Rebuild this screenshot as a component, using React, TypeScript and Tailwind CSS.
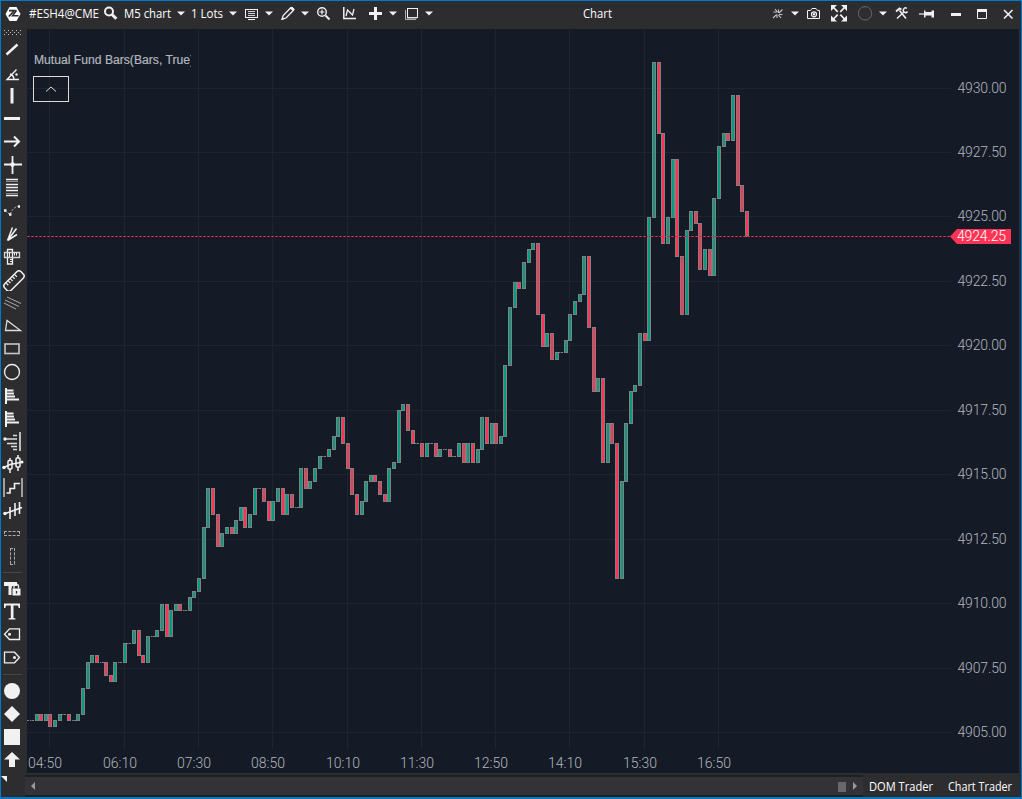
import type { ReactNode } from 'react'

// closing price of every 5 minute bar, in ticks of 0.25 above 4905.00
const CLOSES = [
  2, 2, 3, 2, 3, 1, 2, 3, 3, 2, 2, 3, 7, 11, 12, 11, 11, 9, 8, 11, 11, 14, 14, 16, 12, 11, 15, 15, 16, 20, 15, 19,
  20, 19, 19, 21, 22, 24, 32, 38, 34, 29, 31, 32, 31, 33, 35, 32, 34, 38, 38, 36, 33, 36, 38, 34, 37, 35, 35, 41,
  38, 39, 41, 43, 43, 44, 46, 49, 45, 41, 37, 34, 36, 39, 40, 39, 37, 36, 41, 42, 50, 51, 47, 45, 45, 43, 45, 45,
  43, 44, 44, 43, 43, 45, 42, 45, 42, 44, 49, 45, 48, 45, 46, 57, 66, 70, 69, 73, 75, 76, 65, 60, 62, 58, 59, 59,
  61, 65, 67, 68, 74, 63, 53, 55, 42, 48, 45, 24, 39, 48, 53, 54, 62, 61, 80, 104, 93, 76, 80, 89, 74, 65, 78, 81,
  79, 72, 75, 71, 83, 91, 93, 92, 99, 85, 81, 77,
]

const PRICES = [
  { label: '4930.00', y: 88 },
  { label: '4927.50', y: 152 },
  { label: '4925.00', y: 216 },
  { label: '4922.50', y: 281 },
  { label: '4920.00', y: 345 },
  { label: '4917.50', y: 410 },
  { label: '4915.00', y: 474 },
  { label: '4912.50', y: 539 },
  { label: '4910.00', y: 603 },
  { label: '4907.50', y: 668 },
  { label: '4905.00', y: 732 },
]

const TIMES = [
  { label: '04:50', x: 49 },
  { label: '06:10', x: 124 },
  { label: '07:30', x: 198 },
  { label: '08:50', x: 272 },
  { label: '10:10', x: 347 },
  { label: '11:30', x: 421 },
  { label: '12:50', x: 495 },
  { label: '14:10', x: 569 },
  { label: '15:30', x: 644 },
  { label: '16:50', x: 718 },
]

const barX = (i: number) => Math.floor(48.93 + 4.643 * (i - 5))
const barY = (t: number) => Math.floor(733.343 - 6.4475 * t)

function Bar({ i }: { i: number }) {
  const close = CLOSES[i]
  const open = i === 0 ? 2 : CLOSES[i - 1]
  const x = barX(i)
  if (open === close) {
    return (
      <g>
        <rect x={x} y={barY(close)} width={4} height={1} fill="#808080" />
        <rect x={x + 1} y={barY(close)} width={1} height={1} fill="#4b4e54" />
      </g>
    )
  }
  const top = barY(Math.max(open, close))
  const bottom = barY(Math.min(open, close))
  return (
    <g>
      <rect x={x} y={top} width={4} height={bottom - top + 1} fill="#808080" />
      <rect x={x + 1} y={top + 1} width={2} height={bottom - top - 1} fill={close > open ? '#089981' : '#ff3355'} />
    </g>
  )
}

function Chart() {
  return (
    <svg width="992" height="744" viewBox="27 29 992 744" shapeRendering="crispEdges" className="block">
      {PRICES.map((p) => (
        <rect key={p.label} x={27} y={p.y} width={924} height={1} fill="#20242e" />
      ))}
      {TIMES.map((t) => (
        <rect key={t.label} x={t.x} y={29} width={1} height={720} fill="#20242e" />
      ))}
      {CLOSES.map((_, i) => (
        <Bar key={i} i={i} />
      ))}
      <path d="M27 236.5H951" stroke="#b02a46" strokeWidth="1" strokeDasharray="3 1" />
      <path d="M28 236.5H951" stroke="#ff3355" strokeWidth="1" strokeDasharray="1 3" />
      <path d="M950 236.5L957 229H1011V244H957Z" fill="#ff3355" shapeRendering="auto" />
      <g fontFamily="Roboto, 'Liberation Sans', sans-serif" fontSize="14" fontWeight="300" fill="#b2b5be">
        {PRICES.map((p) => (
          <text key={p.label} x={957.5} y={p.y + 5} textLength="49" lengthAdjust="spacing">
            {p.label}
          </text>
        ))}
        {TIMES.map((t) => (
          <text key={t.label} x={t.x - 21} y={768} textLength="34" lengthAdjust="spacing">
            {t.label}
          </text>
        ))}
        <text x={957} y={241} textLength="49" lengthAdjust="spacing" fill="#ffffff">
          4924.25
        </text>
      </g>
    </svg>
  )
}

function Icon({ w, className, children }: { w: number; className?: string; children: ReactNode }) {
  return (
    <svg
      width={w}
      height={28}
      viewBox={`0 0 ${w} 28`}
      fill="none"
      stroke="#f1f1f1"
      strokeWidth="1.2"
      className={`block shrink-0 ${className ?? ''}`}
    >
      {children}
    </svg>
  )
}

function Caret({ className }: { className: string }) {
  return (
    <Icon w={8} className={className}>
      <path d="M0 10.5H8L4 14.5Z" fill="#f1f1f1" stroke="none" />
    </Icon>
  )
}

function Label({ w, text }: { w: number; text: string }) {
  return (
    <svg width={w} height={28} className="block shrink-0 overflow-visible">
      <text x="0" y="17" textLength={w - 1} lengthAdjust="spacingAndGlyphs" fill="#fff">
        {text}
      </text>
    </svg>
  )
}

function Header() {
  return (
    <div className="flex h-7 items-center bg-[#2d2d30] text-[12px] text-white">
      <Icon w={16} className="ml-1">
        <path d="M4.5 6H11.5L15.5 13L11.5 20H4.5L0.5 13Z" fill="#fff" stroke="none" />
        <path d="M4 9.700H9.500L3.800 15.500" stroke="#2d2d30" strokeWidth="1.700" />
        <path d="M11.500 9.500L7.500 14.700H13.500" stroke="#2d2d30" strokeWidth="1.500" />
      </Icon>
      <div className="ml-2 w-[75px]">
        <Label w={71} text="#ESH4@CME" />
      </div>
      <Icon w={14}>
        <circle cx="5" cy="10.5" r="4" strokeWidth="2" />
        <path d="M8 13.5L12.300 17.800" strokeWidth="3" />
      </Icon>
      <div className="ml-1.5 w-12">
        <Label w={48} text="M5 chart" />
      </div>
      <Caret className="ml-[5px]" />
      <div className="ml-1.5 w-[33px]">
        <Label w={33} text="1 Lots" />
      </div>
      <Caret className="ml-[5px]" />
      <Icon w={14} className="ml-2">
        <rect x="0.5" y="8.5" width="12" height="8" strokeWidth="1" />
        <path d="M3 10.5H10M3 12.5H10M3 14.5H10" strokeWidth="1" stroke="#d0d0d0" />
        <path d="M3 18.5H10" strokeWidth="1" />
      </Icon>
      <Caret className="ml-1.5" />
      <Icon w={14} className="ml-2">
        <path d="M1 18.300L2.200 14.500L9.500 7L12.300 9.500L5 17Z" strokeWidth="1.300" />
        <path d="M9.500 7L11 6L13.300 8.200L12.300 9.500Z" fill="#f1f1f1" strokeWidth="1" />
        <path d="M0.800 18.700L1.500 16L3.500 18Z" fill="#f1f1f1" stroke="none" />
      </Icon>
      <Caret className="ml-1.5" />
      <Icon w={14} className="ml-2">
        <circle cx="5" cy="11" r="4.3" strokeWidth="1.4" />
        <path d="M2.5 11H7.5M5 8.5V13.5" />
        <path d="M8.5 14.5L12.5 18.5" strokeWidth="2" />
      </Icon>
      <Icon w={14} className="ml-3">
        <path d="M0.800 6V17.500H13" strokeWidth="1.500" />
        <path d="M3 15L4.500 9L9.500 14L11 8" strokeWidth="1.300" />
      </Icon>
      <Icon w={14} className="ml-3">
        <path d="M0 12.5H13M6.5 6V19" strokeWidth="3" />
      </Icon>
      <Caret className="ml-1.5" />
      <Icon w={14} className="ml-2">
        <rect x="2.5" y="7.5" width="10" height="9" strokeWidth="1" />
        <path d="M0.5 9V18.5H11" strokeWidth="1" stroke="#b0b0b0" />
        <path d="M2 17.5H12" stroke="#808080" />
      </Icon>
      <Caret className="ml-1.5" />
      <div className="ml-[150px] w-[189px]">
        <Label w={30} text="Chart" />
      </div>
      <Icon w={12}>
        <path
          d="M1 17L4.500 13.700M10.500 8.500L7 12M1.500 11H5.500M3 8L5.500 11M7 13.500H10.500M6.500 14L9 17M5 17V13.500M6.500 12V8.500"
          stroke="#c8c8c8"
          strokeWidth="1.100"
        />
      </Icon>
      <Caret className="ml-[7px]" />
      <Icon w={14} className="ml-2">
        <path d="M0.5 9.5H3.5L5 7.5H9L10.5 9.5H12.5V17.5H0.5Z" strokeWidth="1" />
        <circle cx="7" cy="13.3" r="2.5" />
        <circle cx="7" cy="13.3" r="0.6" />
      </Icon>
      <Icon w={16} className="ml-2.5">
        <path d="M0 4H6L0 10ZM10 4H16V10ZM0 14.500V20.500H6ZM16 14.500V20.500H10Z" fill="#f1f1f1" stroke="none" />
        <path d="M2.500 6.500L6.700 10.800M13.500 6.500L9.300 10.800M2.500 18L6.700 13.700M13.500 18L9.300 13.700" strokeWidth="1.700" />
      </Icon>
      <Icon w={15} className="ml-[11px]">
        <circle cx="7" cy="12.3" r="6.7" stroke="#68686a" strokeWidth="1" />
      </Icon>
      <Caret className="ml-1.5" />
      <Icon w={14} className="ml-2">
        <path d="M2 17.500L9.500 10.500M11.800 7.300A2.300 2.300 0 1 0 12.500 10.500" strokeWidth="1.400" />
        <path d="M1 10.500L4.500 7.500L6.500 8.500" strokeWidth="1.900" />
        <path d="M4.500 9.500L11 17.500" strokeWidth="1.600" />
      </Icon>
      <Icon w={16} className="ml-2.5">
        <path d="M0 13H6" strokeWidth="1.2" />
        <path d="M5 9.500V16.500H6.500V14.500H12.500V16.500H15V9.500H12.500V11H6.500V9.500Z" fill="#f1f1f1" stroke="none" />
      </Icon>
      <Icon w={10} className="ml-4">
        <path d="M0 13.5H10" strokeWidth="3" />
      </Icon>
      <Icon w={11} className="ml-4">
        <path d="M0.5 9V17.5H9.5V9" strokeWidth="1" />
        <path d="M0 9.5H10" strokeWidth="3" />
      </Icon>
      <Icon w={11} className="ml-[15px]">
        <path d="M1 9L9.500 17.500M9.500 9L1 17.500" strokeWidth="1.600" />
      </Icon>
    </div>
  )
}

function Tool({ children }: { children: ReactNode }) {
  return (
    <svg
      width="26"
      height="23"
      viewBox="1 0 26 23"
      fill="none"
      stroke="#f1f1f1"
      strokeWidth="1.3"
      className="block shrink-0"
    >
      {children}
    </svg>
  )
}

function VolumeProfile() {
  return (
    <Tool>
      <path d="M6 4V20" strokeWidth="2" />
      <path d="M7 6.500H13.500M7 9.500H14M7 12.500H15M7 15.500H19" strokeWidth="1.800" />
    </Tool>
  )
}

function Sidebar() {
  return (
    <div className="flex w-[26px] shrink-0 flex-col bg-[#2d2d30]">
      <svg width="26" height="9" viewBox="1 0 26 9" className="block shrink-0">
        <path d="M4 1.5H21M4 5.5H21" stroke="#c0c0c0" strokeDasharray="1 3" />
        <path d="M6 3.5H21" stroke="#c0c0c0" strokeDasharray="1 3" />
      </svg>
      <Tool>
        <path d="M6.5 16.5L17.5 6.5" strokeWidth="2.4" />
      </Tool>
      <Tool>
        <path d="M19 18.5H7L16.5 8.5M10 13A6 6 0 0 1 14 18" strokeWidth="1.4" />
        <circle cx="16.5" cy="13.5" r="1.2" fill="#f1f1f1" stroke="none" />
      </Tool>
      <Tool>
        <path d="M12 4V19.5" strokeWidth="3" />
      </Tool>
      <Tool>
        <path d="M4 11.5H20" strokeWidth="3" />
      </Tool>
      <Tool>
        <path d="M4 11.5H19M14 6.5L19 11.5L14 16.5" strokeWidth="2" />
      </Tool>
      <Tool>
        <path d="M4 11.5H22M12.5 3V21" strokeWidth="1.8" />
        <circle cx="12.5" cy="11.5" r="2.3" fill="#f1f1f1" stroke="none" />
      </Tool>
      <Tool>
        <path d="M6 3.500H18M6 8.500H18M6 11.500H18M6 14.500H18M6 19.500H18" strokeWidth="1.500" />
        <path d="M6 5.500H18M6 17.500H18" stroke="#8a8a8a" strokeWidth="1" />
      </Tool>
      <Tool>
        <path d="M5 11.5L10 15.5C12 10 15 8 19 7" stroke="#bbb" strokeWidth="1" strokeDasharray="2 1.5" />
        <path d="M4 11.5H6.5M9 15.5H11.5M18 7.5H20" strokeWidth="2.5" />
      </Tool>
      <Tool>
        <path d="M7.5 18.5L12.5 5.5M7.5 18.5L16.5 6.5M7.5 18.5L17 12.5" strokeWidth="1.5" />
      </Tool>
      <Tool>
        <path d="M7.5 4.5H12.5V19H7.5Z" strokeWidth="1.3" />
        <path d="M4.5 7.5H19.5V12.5H4.5Z" stroke="#d8d8d8" strokeWidth="1.3" />
        <path d="M10 14.5H12M10 16.5H12M14.5 8V10.5M16.5 8V10.5M9.5 8V12" strokeWidth="1" />
      </Tool>
      <Tool>
        <g transform="rotate(-45 14 13)">
          <rect x="2.500" y="8.500" width="23" height="9" rx="3" strokeWidth="1.500" />
          <path d="M7 9V12M10 9V12M13 9V12M16 9V12M19 9V12" strokeWidth="1.200" />
        </g>
      </Tool>
      <Tool>
        <path d="M4 12L16 18M5 9L19 15.500M7 6L21 12.500" stroke="#aaa" strokeWidth="1" />
      </Tool>
      <Tool>
        <path d="M7 6.5L5.5 16.5H20.5Z" stroke="#ddd" strokeWidth="1.3" />
      </Tool>
      <Tool>
        <rect x="5" y="7" width="14" height="9.500" stroke="#c8c8c8" strokeWidth="1.600" />
      </Tool>
      <Tool>
        <circle cx="12" cy="12" r="7.5" strokeWidth="1.3" />
      </Tool>
      <div className="pt-px">
        <VolumeProfile />
        <VolumeProfile />
      </div>
      <Tool>
        <path d="M20 2V21" stroke="#ccc" strokeWidth="1.8" />
        <path d="M4 9H17M7 13.5H17M11 16.5H17M13 19.5H17M13 5.5H17" stroke="#ddd" strokeWidth="1.3" />
        <circle cx="5" cy="9" r="1.7" fill="#f1f1f1" stroke="none" />
      </Tool>
      <Tool>
        <path d="M3 15L10 11.500L23 9" strokeWidth="1.700" />
        <path d="M10 5V8M10 16V20M18 2V5M18 14V18" strokeWidth="1.500" />
        <rect x="8" y="7.500" width="4" height="8.500" rx="1" strokeWidth="1.500" />
        <rect x="16" y="5" width="4" height="9" rx="1" strokeWidth="1.500" />
        <circle cx="4" cy="14.500" r="1.800" fill="#f1f1f1" stroke="none" />
        <circle cx="22" cy="9" r="1.500" fill="#f1f1f1" stroke="none" />
      </Tool>
      <Tool>
        <path d="M4 2V21M22 2V21" stroke="#bbb" strokeWidth="1.6" />
        <path d="M6.5 17H10V12.5H14.5V7.5H20" strokeWidth="1.6" />
      </Tool>
      <Tool>
        <path d="M4 15L22 8.5M10 8V20M15 4V17M19.5 3V15" strokeWidth="1.6" />
        <circle cx="5" cy="14.5" r="1.8" fill="#f1f1f1" stroke="none" />
      </Tool>
      <Tool>
        <path d="M4 9.5H20M4 13.5H20M4.5 9V14M19.5 9V14" stroke="#aaa" strokeWidth="1" strokeDasharray="3 1.3" />
      </Tool>
      <Tool>
        <path d="M10.5 3V20M14.5 3V20M10 3.5H15M10 19.5H15" stroke="#aaa" strokeWidth="1" strokeDasharray="3 1.3" />
      </Tool>
      <div className="mt-1 mb-1 ml-0.5 h-px w-[19px] shrink-0 bg-[#464649]" />
      <Tool>
        <path d="M4 5H17V9H12V18H8.500V9H4Z" fill="#f1f1f1" stroke="none" />
        <rect x="12" y="11" width="9" height="8" fill="#f1f1f1" stroke="#2d2d30" strokeWidth="1" />
        <path d="M14 11.500V9.500A2 2 0 0 1 18.500 9.500V11.500" />
        <path d="M16.500 14V16.500" stroke="#2d2d30" />
      </Tool>
      <Tool>
        <path
          d="M4 3.5H20V8H18.7L18 5.5H13.5V18L15.5 18.5V19.5H8.5V18.5L10.8 18V5.5H6L5.3 8H4Z"
          fill="#f1f1f1"
          stroke="none"
        />
      </Tool>
      <Tool>
        <path d="M9.5 5.8H19.5V16.5H9.5L4.5 11.2Z" />
        <circle cx="9.5" cy="11.3" r="1.5" fill="#f1f1f1" stroke="none" />
      </Tool>
      <Tool>
        <path d="M14.5 6.2H4.5V16.8H14.5L19.5 11.5Z" />
        <circle cx="14.5" cy="11.5" r="1.5" fill="#f1f1f1" stroke="none" />
      </Tool>
      <div className="mt-[5px] mb-[5px] ml-0.5 h-px w-[19px] shrink-0 bg-[#464649]" />
      <Tool>
        <circle cx="12" cy="11" r="8" fill="#f1f1f1" stroke="none" />
      </Tool>
      <Tool>
        <path d="M12 3L20 11L12 19L4 11Z" fill="#f1f1f1" stroke="none" />
      </Tool>
      <Tool>
        <rect x="4" y="3" width="16" height="16" fill="#f1f1f1" stroke="none" />
      </Tool>
      <Tool>
        <path d="M12 3L20 10.5H15V18H9V10.5H4Z" fill="#f1f1f1" stroke="none" />
      </Tool>
      <svg width="26" height="14" viewBox="1 0 26 14" className="block shrink-0">
        <path d="M1 4H7V10Z" fill="#f1f1f1" />
      </svg>
    </div>
  )
}

function Footer() {
  return (
    <div className="flex h-[22px] bg-[#2d2d30] text-[12px] text-white">
      <div className="flex w-[838px] shrink-0 items-center border-y-2 border-[#202022] bg-[#333337]">
        <svg width="838" height="18" className="block">
          <path d="M10 5V13L6 9Z" fill="#999" />
          <rect x="813" y="5" width="8" height="10" fill="#686868" />
          <path d="M828 5V13L832 9Z" fill="#999" />
        </svg>
      </div>
      <div className="flex flex-1 items-center bg-[#2d2d30]">
        <svg width="156" height="22" className="block shrink-0 overflow-visible">
          <text x="6" y="16" textLength="64" lengthAdjust="spacingAndGlyphs" fill="#fff">
            DOM Trader
          </text>
          <text x="85" y="16" textLength="64" lengthAdjust="spacingAndGlyphs" fill="#fff">
            Chart Trader
          </text>
        </svg>
      </div>
    </div>
  )
}

export default function App() {
  return (
    <div className="flex h-[799px] w-[1022px] flex-col overflow-hidden border border-b-2 border-[#007acc] bg-[#2d2d30] font-['Open_Sans','Noto_Sans',sans-serif]">
      <Header />
      <div className="flex min-h-0 flex-1">
        <Sidebar />
        <div className="flex flex-1 flex-col">
          <div className="relative h-[744px] w-[992px] bg-[#151b26]">
            <Chart />
            <div className="absolute top-[22px] left-[7px] w-[157px] overflow-hidden">
              <svg width="157" height="18" className="block">
                <text
                  x="0"
                  y="13"
                  textLength="160"
                  lengthAdjust="spacingAndGlyphs"
                  fontFamily="'Liberation Sans', sans-serif"
                  fontSize="12"
                  fill="#b2b5be"
                  stroke="#b2b5be"
                  strokeWidth="0.2"
                >
                  Mutual Fund Bars(Bars, True)
                </text>
              </svg>
            </div>
            <button className="absolute top-[47px] left-[6px] flex h-[26px] w-9 items-center justify-center border border-[#e0dcd4]">
              <svg width="12" height="7" viewBox="0 0 12 7" fill="none" stroke="#e0dcd4">
                <path d="M1 5.500L6 1L11 5.500" />
              </svg>
            </button>
          </div>
          <div className="mt-0.5 -ml-0.5">
            <Footer />
          </div>
        </div>
      </div>
    </div>
  )
}
